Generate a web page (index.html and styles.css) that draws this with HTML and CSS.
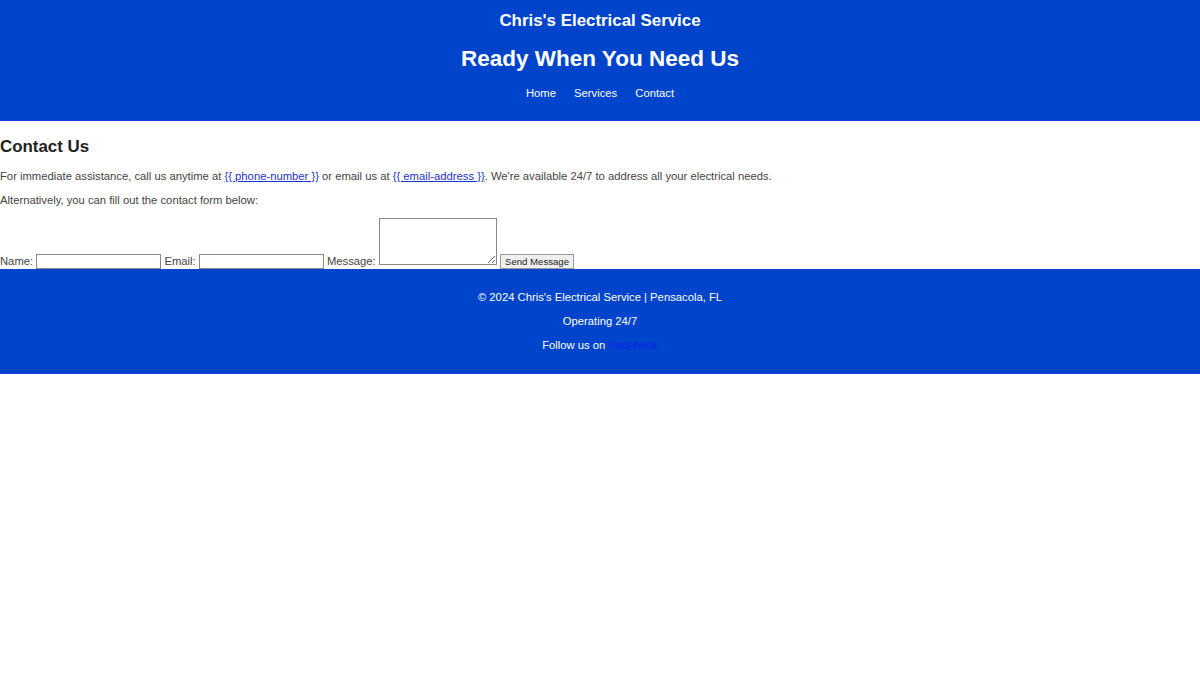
FILE: index.html
```html
<!DOCTYPE html>
<html>
<head>
<meta charset="utf-8">
<title>Chris's Electrical Service</title>
<link rel="stylesheet" href="styles.css">
</head>
<body>
<header class="site-header">
  <h1 class="brand">Chris's Electrical Service</h1>
  <h2 class="tagline">Ready When You Need Us</h2>
  <nav class="nav">
    <a href="#">Home</a>
    <a href="#">Services</a>
    <a href="#">Contact</a>
  </nav>
</header>
<main class="contact">
  <h2 class="contact-title">Contact Us</h2>
  <p class="text">For immediate assistance, call us anytime at <a class="link" href="#">{{ phone-number }}</a> or email us at <a class="link" href="#">{{ email-address }}</a>. We're available 24/7 to address all your electrical needs.</p>
  <p class="text">Alternatively, you can fill out the contact form below:</p>
  <form class="form">
    <label>Name:</label> <input class="field" type="text"> <label>Email:</label> <input class="field" type="email"> <label>Message:</label> <textarea class="msg"></textarea> <button class="send" type="button">Send Message</button>
  </form>
</main>
<footer class="site-footer">
  <p>© 2024 Chris's Electrical Service | Pensacola, FL</p>
  <p>Operating 24/7</p>
  <p>Follow us on <a class="fb" href="#">Facebook</a></p>
</footer>
</body>
</html>
```
FILE: styles.css
```css
html, body {
  margin: 0;
  padding: 0;
  background: #fff;
  font-family: "Liberation Sans", Arial, sans-serif;
}
.site-header {
  background: #0044cc;
  color: #fff;
  text-align: center;
  padding: 10px 0 20px;
  border-bottom: 1px solid #1a3ae0;
}
.brand {
  margin: 0;
  font-size: 16.9px;
  line-height: 21px;
}
.tagline {
  margin: 14px 0 0;
  font-size: 22.5px;
  line-height: 28px;
}
.nav {
  margin-top: 13px;
  font-size: 11.25px;
  line-height: 14px;
}
.nav a {
  color: #fff;
  text-decoration: none;
  margin: 0 7.5px;
}
.contact {
  padding: 0;
}
.contact-title {
  margin: 16px 0 0;
  font-size: 16.9px;
  line-height: 20px;
  color: #222;
}
.text {
  margin: 12px 0 0;
  font-size: 11.25px;
  line-height: 14px;
  color: #444;
}
.text + .text {
  margin-top: 10px;
}
.link {
  color: #2233cc;
}
.form {
  margin-top: 11px;
  font-size: 11.25px;
  color: #444;
  line-height: 14px;
}
.field {
  width: 121px;
  height: 11px;
  padding: 1px;
  border: 1px solid #888;
  font-size: 11px;
  margin: 0;
  vertical-align: baseline;
}
.msg {
  width: 114px;
  height: 43px;
  padding: 1px;
  border: 1px solid #888;
  margin: 0;
  resize: vertical;
  vertical-align: baseline;
}
.send {
  font-family: "Liberation Sans", Arial, sans-serif;
  font-size: 9.6px;
  padding: 1px 4px;
  border: 1px solid #999;
  background: #efefef;
  color: #222;
  height: 15px;
  line-height: 11px;
  vertical-align: baseline;
}
.site-footer {
  background: #0044cc;
  color: #fff;
  text-align: center;
  padding: 11px 0;
  border-bottom: 1px solid #1a3ae0;
  font-size: 11.25px;
  line-height: 14px;
}
.site-footer p {
  margin: 10px 0;
}
.fb {
  color: #0022ee;
  text-decoration: none;
}
```
